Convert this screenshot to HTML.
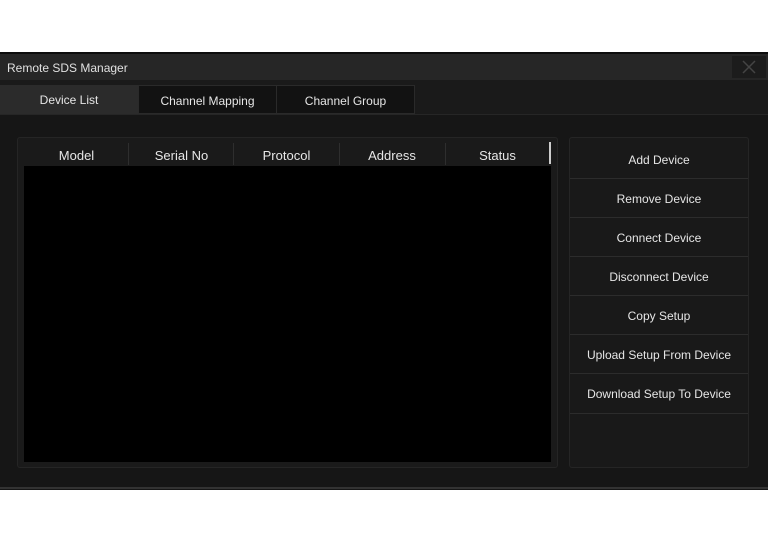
<!DOCTYPE html>
<html><head><style>
body{margin:0;width:768px;height:543px;background:#fff;position:relative;overflow:hidden;font-family:"Liberation Sans",sans-serif;color:#e6e6e6}
div{position:absolute;box-sizing:border-box}
.t{font-size:12px;text-align:center}
</style></head><body>
<div style="left:0;top:52px;width:768px;height:438px;background:#161616;border-top:2px solid #0d0d0d"></div>
<div style="left:0;top:54px;width:768px;height:26px;background:#262626"></div>
<div style="left:7px;top:61px;font-size:12px;color:#e0e0e0">Remote SDS Manager</div>
<div style="left:732px;top:56px;width:34px;height:22px;background:#1c1c1c"></div>
<svg style="position:absolute;left:741px;top:59px" width="16" height="16"><path d="M2 2L14 14M14 2L2 14" stroke="#444" stroke-width="1.5"/></svg>
<div style="left:0;top:80px;width:768px;height:34px;background:#1a1a1a"></div>
<div style="left:0;top:85px;width:138px;height:29px;background:#2b2b2b"></div>
<div class="t" style="left:0;top:93px;width:138px">Device List</div>
<div style="left:138px;top:85px;width:139px;height:29px;background:#121212;border:1px solid #2a2a2a"></div>
<div class="t" style="left:138px;top:94px;width:139px">Channel Mapping</div>
<div style="left:276px;top:85px;width:139px;height:29px;background:#121212;border:1px solid #2a2a2a"></div>
<div class="t" style="left:276px;top:94px;width:139px">Channel Group</div>
<div style="left:0;top:114px;width:768px;height:1px;background:#262626"></div>
<div style="left:17px;top:137px;width:541px;height:331px;background:#1a1a1a;border:1px solid #252525;border-radius:3px"></div>
<div style="left:24px;top:166px;width:527px;height:296px;background:#000"></div>
<div class="t" style="left:24px;top:148px;width:105px;font-size:13px">Model</div>
<div class="t" style="left:129px;top:148px;width:105px;font-size:13px">Serial No</div>
<div class="t" style="left:234px;top:148px;width:105px;font-size:13px">Protocol</div>
<div class="t" style="left:339px;top:148px;width:106px;font-size:13px">Address</div>
<div class="t" style="left:445px;top:148px;width:105px;font-size:13px">Status</div>
<div style="left:128px;top:143px;width:1px;height:22px;background:#2e2e2e"></div>
<div style="left:233px;top:143px;width:1px;height:22px;background:#2e2e2e"></div>
<div style="left:339px;top:143px;width:1px;height:22px;background:#2e2e2e"></div>
<div style="left:445px;top:143px;width:1px;height:22px;background:#2e2e2e"></div>
<div style="left:549px;top:142px;width:2px;height:22px;background:#ccc"></div>
<div style="left:569px;top:137px;width:180px;height:331px;background:#191919;border:1px solid #252525;border-radius:3px"></div>
<div class="t" style="left:569px;top:153px;width:180px">Add Device</div>
<div class="t" style="left:569px;top:192px;width:180px">Remove Device</div>
<div class="t" style="left:569px;top:231px;width:180px">Connect Device</div>
<div class="t" style="left:569px;top:270px;width:180px">Disconnect Device</div>
<div class="t" style="left:569px;top:309px;width:180px">Copy Setup</div>
<div class="t" style="left:569px;top:348px;width:180px">Upload Setup From Device</div>
<div class="t" style="left:569px;top:387px;width:180px">Download Setup To Device</div>
<div style="left:570px;top:178px;width:178px;height:1px;background:#2c2c2c"></div>
<div style="left:570px;top:217px;width:178px;height:1px;background:#2c2c2c"></div>
<div style="left:570px;top:256px;width:178px;height:1px;background:#2c2c2c"></div>
<div style="left:570px;top:295px;width:178px;height:1px;background:#2c2c2c"></div>
<div style="left:570px;top:334px;width:178px;height:1px;background:#2c2c2c"></div>
<div style="left:570px;top:373px;width:178px;height:1px;background:#2c2c2c"></div>
<div style="left:570px;top:413px;width:178px;height:1px;background:#2c2c2c"></div>
<div style="left:0;top:487px;width:768px;height:2px;background:#333"></div>
</body></html>
